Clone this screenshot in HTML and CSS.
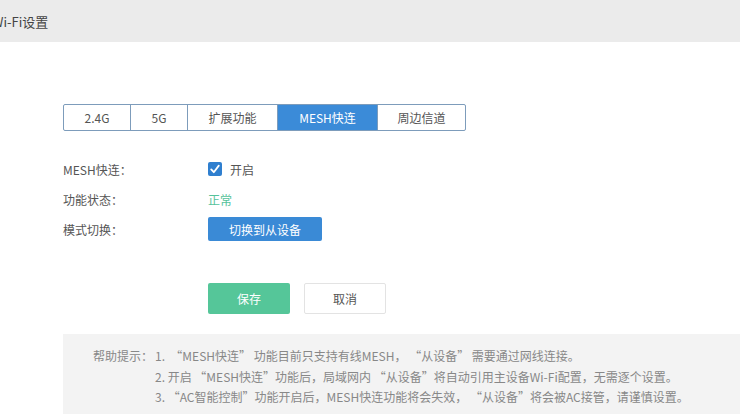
FILE: index.html
```html
<!DOCTYPE html>
<html lang="zh-CN">
<head>
  <meta charset="UTF-8">
  <title>Wi-Fi设置</title>
  <link rel="stylesheet" href="styles.css">
</head>
<body>

<div class="page-header">
  <span class="page-title">Wi-Fi设置</span>
</div>

<div class="content">
  <div class="tabs">
    <div class="tab tab-24">2.4G</div>
    <div class="tab tab-5">5G</div>
    <div class="tab tab-ext">扩展功能</div>
    <div class="tab tab-mesh active">MESH快连</div>
    <div class="tab tab-chan">周边信道</div>
  </div>

  <div class="form">
    <div class="form-row">
      <div class="form-label">MESH快连：</div>
      <div class="form-value">
        <span class="checkbox">
          <svg viewBox="0 0 14 14" width="14" height="14">
            <path d="M3.2 7.4 L5.8 10.2 L10.8 3.6" fill="none" stroke="#fff" stroke-width="1.8" stroke-linecap="round" stroke-linejoin="round"/>
          </svg>
        </span>
        <span class="check-text">开启</span>
      </div>
    </div>
    <div class="form-row">
      <div class="form-label">功能状态：</div>
      <div class="form-value status-ok">正常</div>
    </div>
    <div class="form-row">
      <div class="form-label">模式切换：</div>
      <div class="form-value">
        <button class="btn btn-blue">切换到从设备</button>
      </div>
    </div>
  </div>

  <div class="actions">
    <button class="btn btn-save">保存</button>
    <button class="btn btn-cancel">取消</button>
  </div>

  <div class="help">
    <div class="help-title">帮助提示：</div>
    <div class="help-list">
      <div>1. &nbsp;“MESH快连” 功能目前只支持有线MESH， “从设备” 需要通过网线连接。</div>
      <div>2. 开启 “MESH快连”功能后，局域网内 “从设备”将自动引用主设备Wi-Fi配置，无需逐个设置。</div>
      <div>3. “AC智能控制”功能开启后，MESH快连功能将会失效， “从设备”将会被AC接管，请谨慎设置。</div>
    </div>
  </div>
</div>

</body>
</html>
```

FILE: styles.css
```css
html, body {
  margin: 0;
  padding: 0;
  background-color: #ffffff;
  font-family: "Noto Sans CJK SC", "Noto Sans", sans-serif;
  color: #555;
  overflow: hidden;
}

.page-header {
  height: 42px;
  background-color: #ebebeb;
  display: flex;
  align-items: center;
}

.page-title {
  margin-left: -8px;
  font-size: 13px;
  color: #444;
}

.content {
  padding: 62px 0 0 63px;
}

.tabs {
  display: flex;
  width: 403px;
  height: 27px;
  border: 1px solid #7d9cbb;
  border-radius: 2px;
  box-sizing: border-box;
}

.tab {
  display: flex;
  align-items: center;
  justify-content: center;
  font-size: 12px;
  color: #555;
  border-right: 1px solid #7d9cbb;
  box-sizing: border-box;
}

.tab:last-child {
  border-right: none;
}

.tab-24 { width: 67px; }
.tab-5 { width: 57px; }
.tab-ext { width: 90px; }
.tab-mesh { width: 100px; }
.tab-chan { flex: 1; }

.tab.active {
  background-color: #3b8bd8;
  color: #fff;
}

.form {
  margin-top: 23px;
}

.form-row {
  display: flex;
  align-items: center;
  height: 30px;
  font-size: 12px;
}

.form-label {
  width: 145px;
  color: #555;
}

.form-value {
  display: flex;
  align-items: center;
}

.checkbox {
  width: 14px;
  height: 14px;
  background-color: #2f7fcf;
  border-radius: 2px;
  display: flex;
}

.check-text {
  margin-left: 8px;
}

.status-ok {
  color: #56c29b;
}

.btn {
  font-family: inherit;
  font-size: 12px;
  border: none;
  border-radius: 2px;
  cursor: pointer;
}

.btn-blue {
  width: 114px;
  height: 24px;
  background-color: #3a8ad6;
  color: #fff;
}

.actions {
  display: flex;
  gap: 14px;
  margin: 39px 0 0 145px;
}

.btn-save {
  width: 82px;
  height: 31px;
  background-color: #55c699;
  color: #fff;
}

.btn-cancel {
  width: 82px;
  height: 31px;
  background-color: #fff;
  border: 1px solid #e3e3e3;
  color: #555;
}

.help {
  display: flex;
  margin-top: 20px;
  padding: 12px 0 14px 30px;
  background-color: #f3f3f3;
  font-size: 12px;
  color: #888;
  line-height: 20.5px;
}

.help-title {
  width: 62px;
}
```
